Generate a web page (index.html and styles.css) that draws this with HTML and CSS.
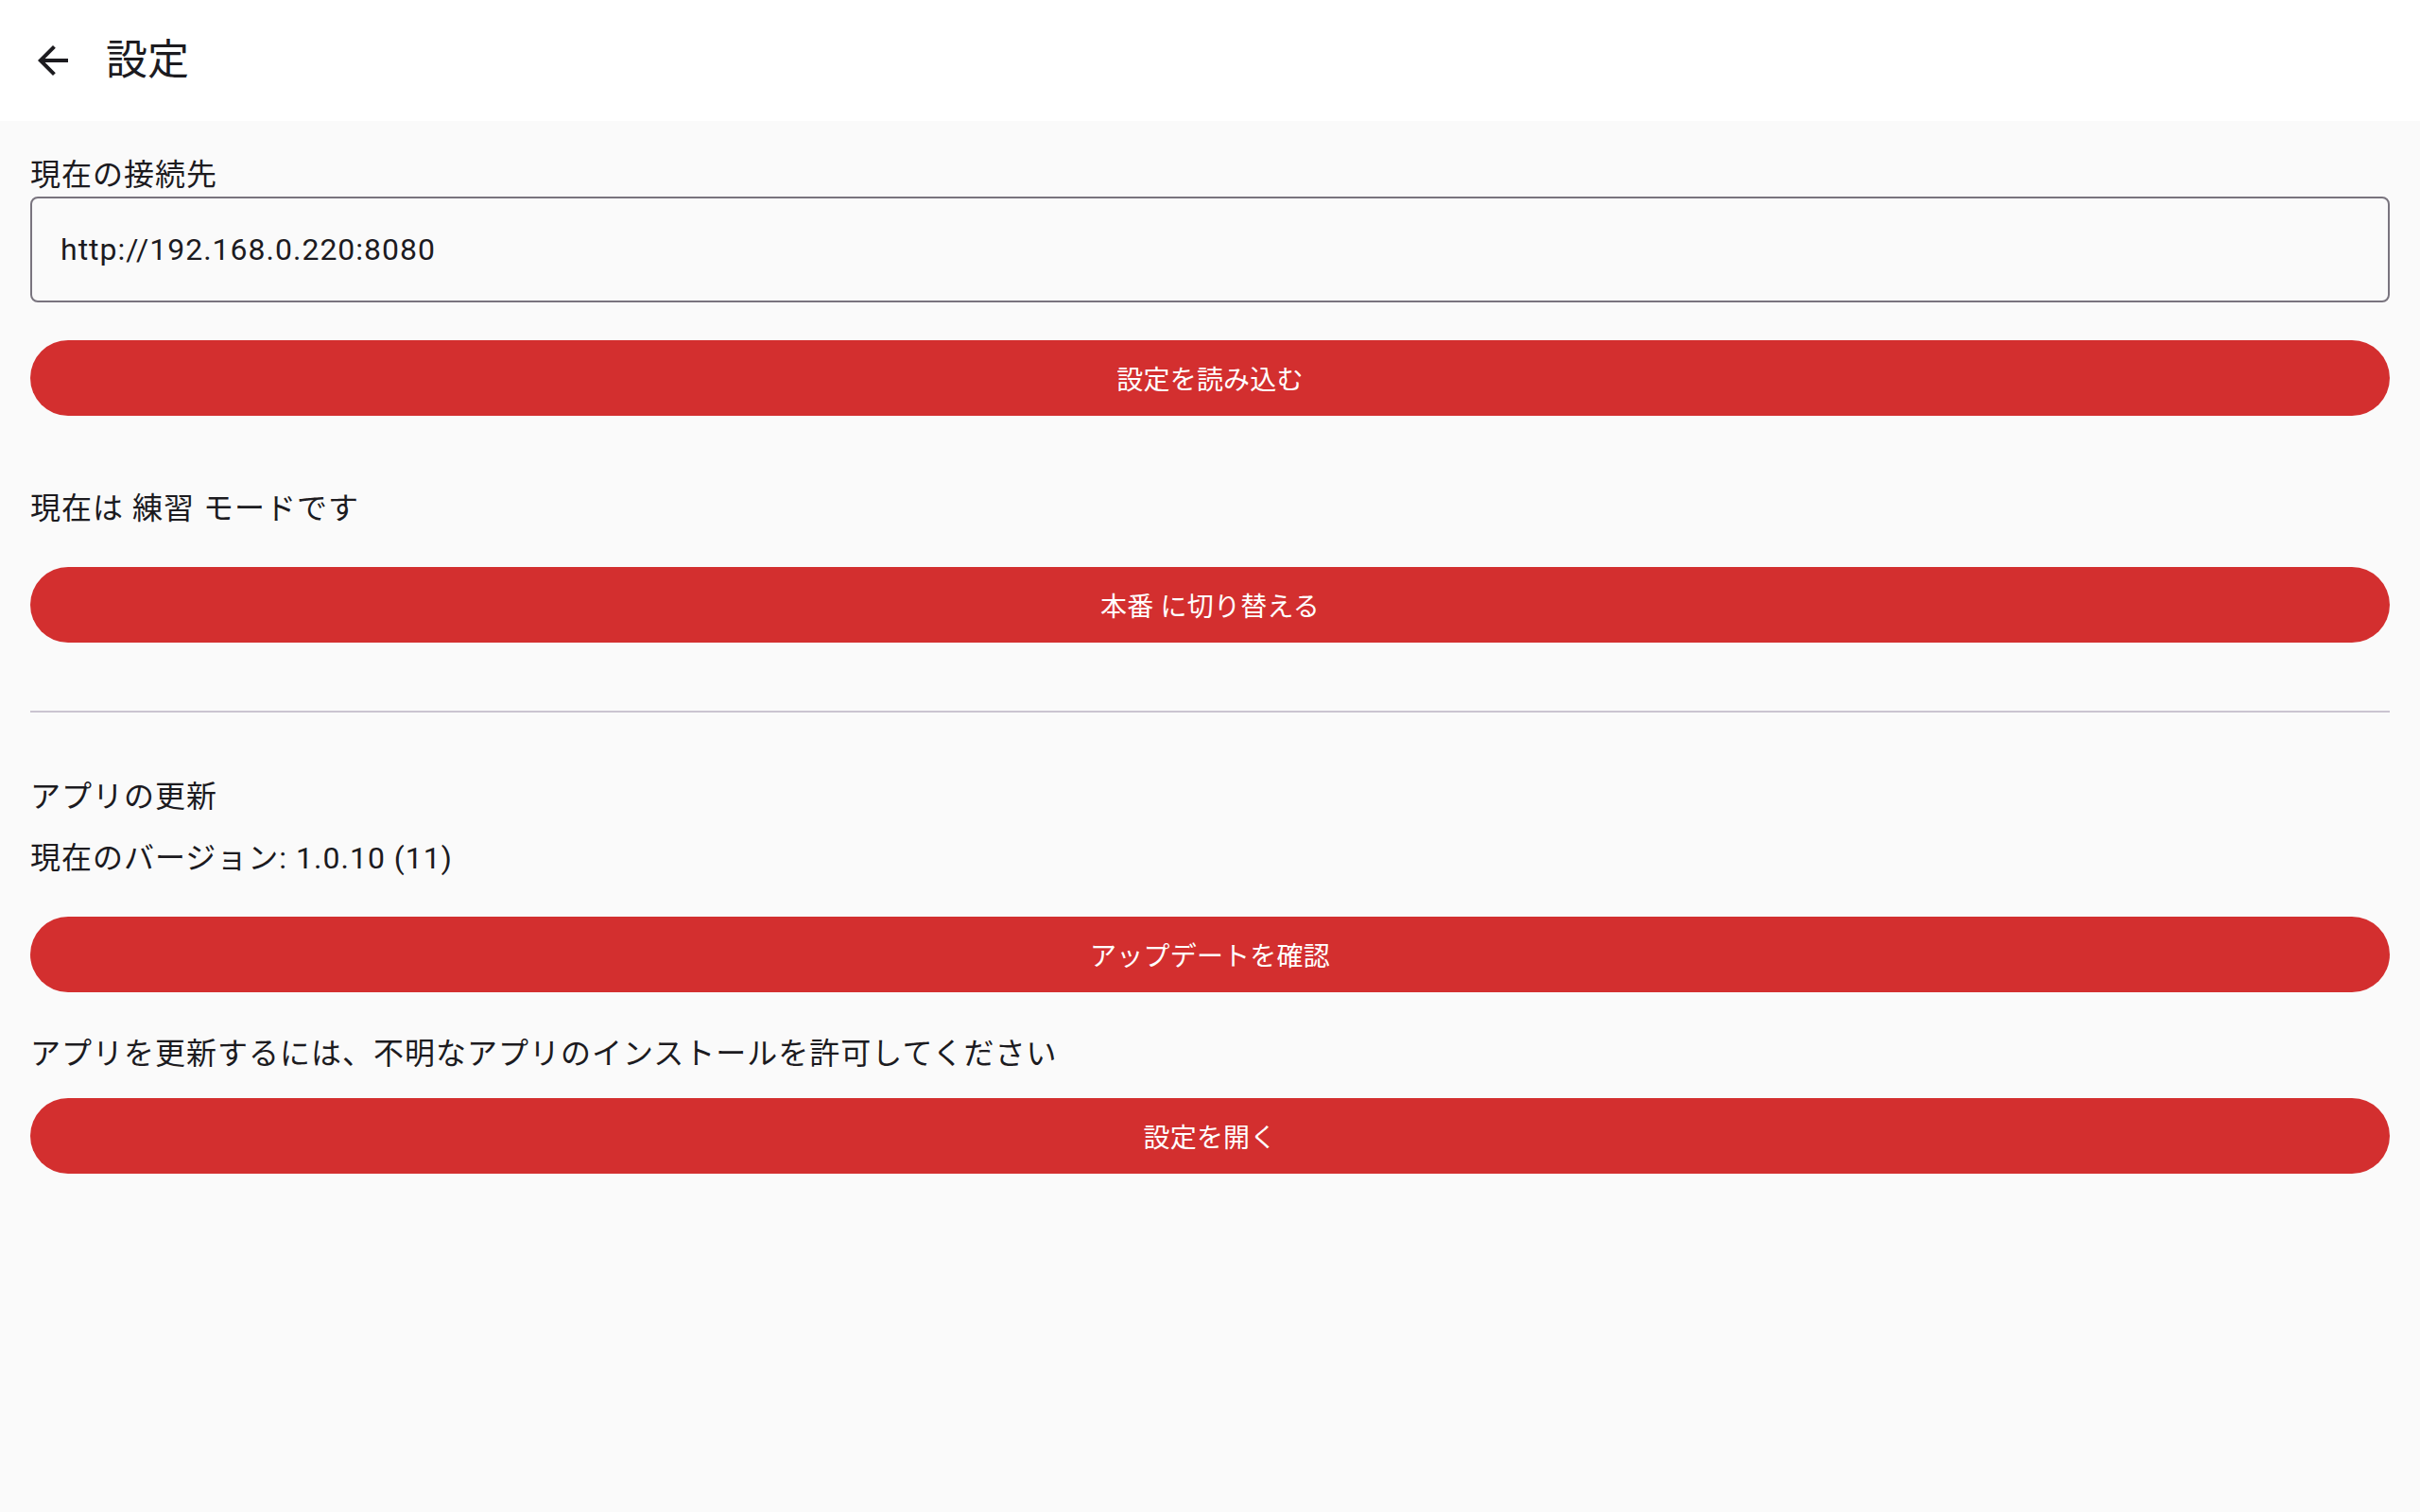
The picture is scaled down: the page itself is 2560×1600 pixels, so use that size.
FILE: index.html
```html
<!DOCTYPE html>
<html lang="ja">
<head>
<meta charset="utf-8">
<title>設定</title>
<link rel="stylesheet" href="styles.css">
</head>
<body>
<header class="topbar">
  <button class="nav-btn" aria-label="戻る">
    <svg class="nav-icon" viewBox="0 0 24 24" width="48" height="48"><path d="M20 11H7.83l5.59-5.59L12 4l-8 8 8 8 1.41-1.41L7.83 13H20v-2z" fill="#1C1B1F"/></svg>
  </button>
  <h1 class="title">設定</h1>
</header>
<main class="content">
  <div class="field-group">
    <label class="field-label">現在の接続先</label>
    <div class="text-field">http://192.168.0.220:8080</div>
  </div>
  <button class="btn btn-load">設定を読み込む</button>
  <p class="text mode-text">現在は 練習 モードです</p>
  <button class="btn btn-mode">本番 に切り替える</button>
  <hr class="divider">
  <p class="text update-title">アプリの更新</p>
  <p class="text version">現在のバージョン: 1.0.10 (11)</p>
  <button class="btn btn-update">アップデートを確認</button>
  <p class="text perm-text">アプリを更新するには、不明なアプリのインストールを許可してください</p>
  <button class="btn btn-open">設定を開く</button>
</main>
</body>
</html>
```
FILE: styles.css
```css
html, body {
  margin: 0;
  padding: 0;
  height: 100%;
}
body {
  background: #FAFAFA;
  font-family: Roboto, "Noto Sans CJK JP", sans-serif;
  color: #1C1B1F;
}
.topbar {
  height: 128px;
  background: #FFFFFF;
  display: flex;
  align-items: center;
}
.nav-btn {
  width: 48px;
  height: 48px;
  margin-left: 32px;
  padding: 0;
  border: none;
  background: transparent;
  display: flex;
  align-items: center;
  justify-content: center;
}
.nav-icon {
  display: block;
}
.title {
  margin: 0 0 0 32px;
  font-size: 44px;
  font-weight: 400;
  line-height: 56px;
}
.content {
  display: flex;
  flex-direction: column;
  padding: 34px 32px 0 32px;
}
.field-group {
  display: flex;
  flex-direction: column;
}
.field-label {
  font-size: 32px;
  line-height: 46px;
  letter-spacing: 1px;
}
.text-field {
  box-sizing: border-box;
  height: 112px;
  border: 2px solid #79747E;
  border-radius: 8px;
  padding: 0 30px;
  display: flex;
  align-items: center;
  font-size: 32px;
  letter-spacing: 1px;
}
.btn {
  height: 80px;
  border: none;
  border-radius: 40px;
  background: #D32F2F;
  color: #FFFFFF;
  font-family: Roboto, "Noto Sans CJK JP", sans-serif;
  font-size: 28px;
  font-weight: 400;
  letter-spacing: 0.2px;
  padding: 0 48px;
  display: flex;
  align-items: center;
  justify-content: center;
}
.btn-load { margin-top: 40px; }
.text {
  margin: 0;
  font-size: 32px;
  line-height: 48px;
  letter-spacing: 1px;
}
.mode-text { margin-top: 74px; }
.btn-mode { margin-top: 38px; }
.divider {
  margin: 72px 0 0 0;
  border: none;
  height: 2px;
  background: #CAC4D0;
}
.update-title { margin-top: 65px; }
.version { margin-top: 17px; }
.btn-update { margin-top: 38px; }
.perm-text { margin-top: 41px; }
.btn-open { margin-top: 23px; }
```
